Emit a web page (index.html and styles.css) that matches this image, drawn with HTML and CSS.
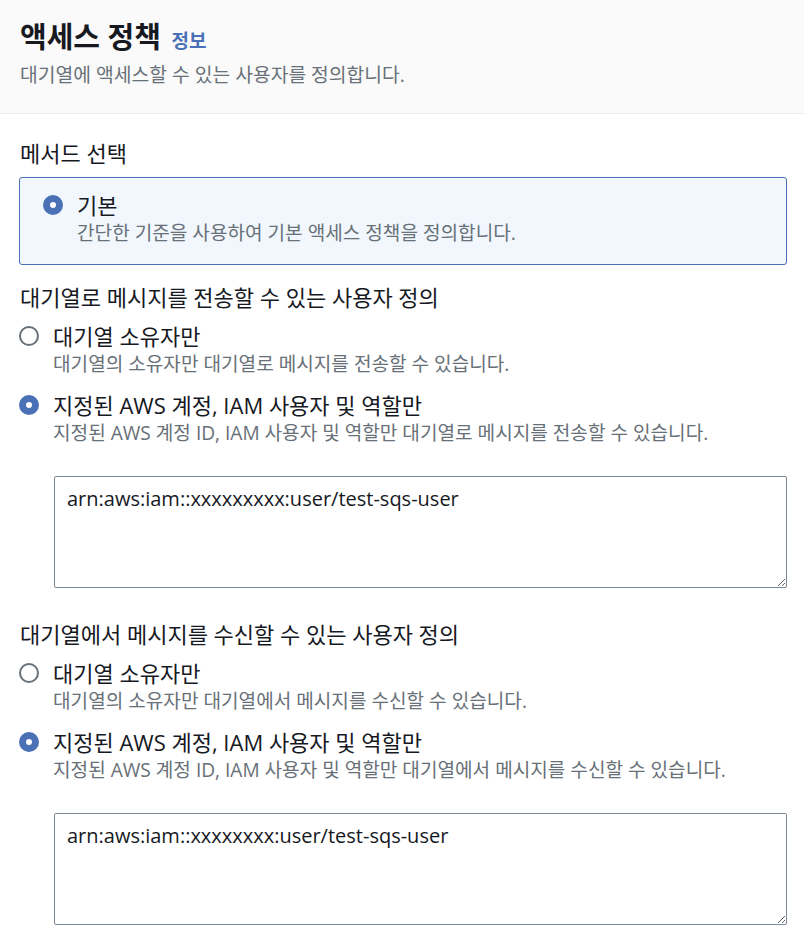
FILE: index.html
```html
<!DOCTYPE html>
<html lang="ko">
<head>
<meta charset="utf-8">
<title>액세스 정책</title>
<link rel="stylesheet" href="styles.css">
</head>
<body>
<header class="header">
  <h1 class="title">액세스 정책 <a class="info" href="#">정보</a></h1>
  <p class="subtitle">대기열에 액세스할 수 있는 사용자를 정의합니다.</p>
</header>
<main class="content">
  <div class="field-label">메서드 선택</div>
  <div class="tile">
    <div class="option">
      <span class="radio checked"></span>
      <div class="option-text">
        <div class="option-label">기본</div>
        <div class="option-desc">간단한 기준을 사용하여 기본 액세스 정책을 정의합니다.</div>
      </div>
    </div>
  </div>

  <div class="field-label section">대기열로 메시지를 전송할 수 있는 사용자 정의</div>
  <div class="options">
    <div class="option">
      <span class="radio"></span>
      <div class="option-text">
        <div class="option-label">대기열 소유자만</div>
        <div class="option-desc">대기열의 소유자만 대기열로 메시지를 전송할 수 있습니다.</div>
      </div>
    </div>
    <div class="option">
      <span class="radio checked"></span>
      <div class="option-text">
        <div class="option-label">지정된 AWS 계정, IAM 사용자 및 역할만</div>
        <div class="option-desc">지정된 AWS 계정 ID, IAM 사용자 및 역할만 대기열로 메시지를 전송할 수 있습니다.</div>
      </div>
    </div>
  </div>
  <textarea class="textarea" readonly>arn:aws:iam::xxxxxxxxx:user/test-sqs-user</textarea>

  <div class="field-label section2">대기열에서 메시지를 수신할 수 있는 사용자 정의</div>
  <div class="options">
    <div class="option">
      <span class="radio"></span>
      <div class="option-text">
        <div class="option-label">대기열 소유자만</div>
        <div class="option-desc">대기열의 소유자만 대기열에서 메시지를 수신할 수 있습니다.</div>
      </div>
    </div>
    <div class="option">
      <span class="radio checked"></span>
      <div class="option-text">
        <div class="option-label">지정된 AWS 계정, IAM 사용자 및 역할만</div>
        <div class="option-desc">지정된 AWS 계정 ID, IAM 사용자 및 역할만 대기열에서 메시지를 수신할 수 있습니다.</div>
      </div>
    </div>
  </div>
  <textarea class="textarea" readonly>arn:aws:iam::xxxxxxxx:user/test-sqs-user</textarea>
</main>
</body>
</html>
```
FILE: styles.css
```css
* { box-sizing: border-box; }
html, body {
  margin: 0;
  padding: 0;
  background: #ffffff;
  font-family: "Open Sans", "Noto Sans CJK KR", sans-serif;
  color: #16191f;
}
.header {
  background: #fafafa;
  border-bottom: 1px solid #eaeded;
  padding: 21px 20px 26px;
}
.title {
  margin: 0;
  font-size: 29px;
  line-height: 32px;
  font-weight: 700;
  color: #16191f;
}
.info {
  font-size: 19px;
  font-weight: 700;
  color: #4a70b5;
  text-decoration: none;
  margin-left: 3px;
}
.subtitle {
  margin: 6px 0 0;
  font-size: 19.3px;
  line-height: 24px;
  color: #687078;
}
.content {
  padding: 25px 17px 20px 19px;
}
.field-label {
  font-size: 22px;
  line-height: 28px;
  padding-left: 1px;
}
.field-label.section { margin-top: 18px; }
.field-label.section2 { margin-top: 32px; }
.tile {
  margin-top: 10px;
  border: 1px solid #4a70b5;
  border-radius: 3px;
  background: #f1f7fd;
  padding: 13px 20px 17px 23px;
}
.options {
  margin-top: 11px;
  display: flex;
  flex-direction: column;
  gap: 13px;
}
.option {
  display: flex;
  align-items: flex-start;
  gap: 14px;
}
.radio {
  flex: none;
  width: 20px;
  height: 20px;
  margin-top: 4px;
  border-radius: 50%;
  border: 2px solid #687078;
  background: #fff;
}
.radio.checked {
  border: 7px solid #4a70b5;
  background: #fff;
}
.option-label {
  font-size: 22px;
  line-height: 28px;
}
.option-desc {
  font-size: 19.1px;
  line-height: 28px;
  color: #687078;
}
.textarea {
  display: block;
  margin: 29px 0 0 35px;
  width: 733px;
  height: 112px;
  border: 1px solid #7d8998;
  border-radius: 2px;
  padding: 8px 12px;
  font-family: "Open Sans", "Noto Sans CJK KR", sans-serif;
  font-size: 20px;
  line-height: 28px;
  color: #16191f;
  background: #fff;
  resize: both;
  outline: none;
}
```
